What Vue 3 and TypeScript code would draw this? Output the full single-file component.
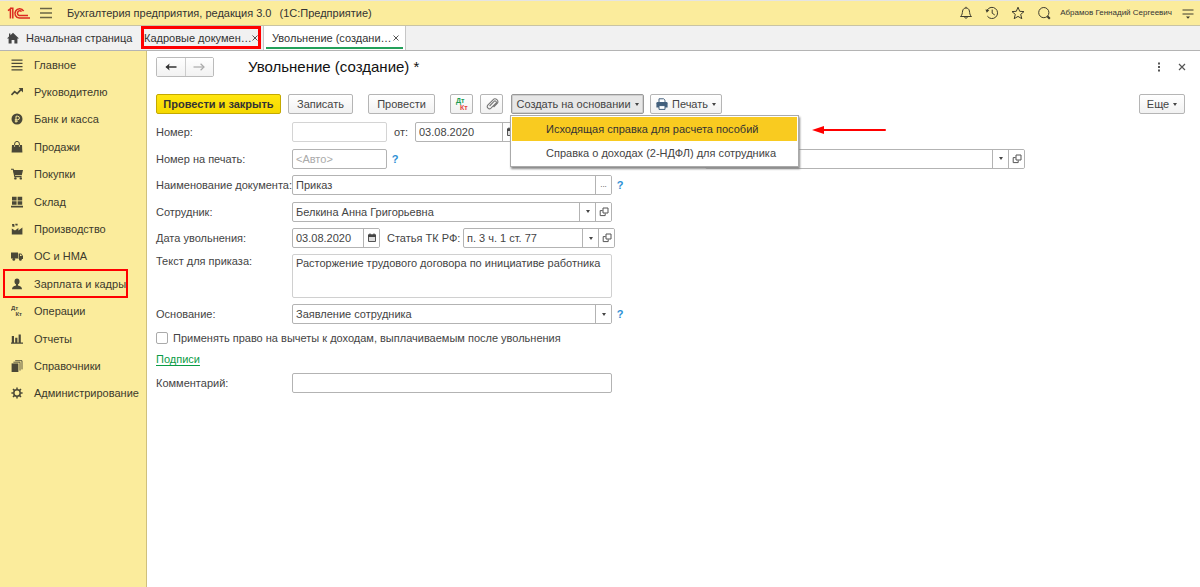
<script setup lang="ts">
import { ref } from 'vue'

interface Section {
  id: string
  title: string
  marked?: boolean
}

const sections: Section[] = [
  { id: 'main', title: 'Главное' },
  { id: 'chart', title: 'Руководителю' },
  { id: 'ruble', title: 'Банк и касса' },
  { id: 'bag', title: 'Продажи' },
  { id: 'cart', title: 'Покупки' },
  { id: 'store', title: 'Склад' },
  { id: 'factory', title: 'Производство' },
  { id: 'truck', title: 'ОС и НМА' },
  { id: 'person', title: 'Зарплата и кадры', marked: true },
  { id: 'dtkt', title: 'Операции' },
  { id: 'bars', title: 'Отчеты' },
  { id: 'books', title: 'Справочники' },
  { id: 'gear', title: 'Администрирование' },
]

const docNumber = ref('')
const docDate = ref('03.08.2020')
const printNumber = ref('')
const organization = ref('')
const docName = ref('Приказ')
const employee = ref('Белкина Анна Григорьевна')
const dismissalDate = ref('03.08.2020')
const article = ref('п. 3 ч. 1 ст. 77')
const orderText = ref('Расторжение трудового договора по инициативе работника')
const reason = ref('Заявление сотрудника')
const applyDeductions = ref(false)
const comment = ref('')
</script>

<template>
  <div class="app">
    <header class="topbar">
      <svg class="logo" viewBox="0 0 24 14" aria-label="1С">
        <g fill="none" stroke="#dc2a20" stroke-width="1.5">
          <path d="M1 4.6 3.4 2.8V12.4M3 2.2H5.8V12.4" />
          <path d="M16.6 5.2A4.6 4.6 0 1 0 12.4 12H23" />
          <path d="M14.6 5.6A2.4 2.4 0 1 0 12.4 9.6H21" />
        </g>
      </svg>
      <button class="icon-btn burger" aria-label="Меню">
        <svg viewBox="0 0 12 12" width="12" height="12"><path d="M0 1.5H12M0 6H12M0 10.5H12" stroke="#6b6545" stroke-width="1.3" /></svg>
      </button>
      <span class="app-title">Бухгалтерия предприятия, редакция 3.0</span>
      <span class="app-sub">(1С:Предприятие)</span>
      <nav class="tools">
        <button class="icon-btn" aria-label="Уведомления">
          <svg viewBox="0 0 14 14"><path d="M1.5 10.5C3.4 9 3.2 7 3.6 5 4 3 5.2 2 7 2S10 3 10.4 5C10.8 7 10.6 9 12.5 10.5ZM7 .8V2M5.4 10.7Q7 14 8.6 10.7" /></svg>
        </button>
        <button class="icon-btn" aria-label="История">
          <svg viewBox="0 0 14 14"><path d="M2.2 4A5.6 5.6 0 1 1 2.4 10.2M7.2 3.6V7.2L9.8 9" /><path d="M.4 3.4 4.4 4 1.8 6.8Z" fill="#3f3d2e" stroke="none" /></svg>
        </button>
        <button class="icon-btn" aria-label="Избранное">
          <svg viewBox="0 0 14 14"><path d="M7 1.2 8.7 5.3 13 5.6 9.7 8.4 10.8 12.7 7 10.4 3.2 12.7 4.3 8.4 1 5.6 5.3 5.3Z" /></svg>
        </button>
        <button class="icon-btn" aria-label="Поиск">
          <svg viewBox="0 0 14 14"><circle cx="6.8" cy="6.6" r="5.1" /><path d="M10.4 10.2 12.8 12.8" stroke-width="2" /></svg>
        </button>
        <a class="user" href="#user">Абрамов Геннадий Сергеевич</a>
        <button class="icon-btn" aria-label="Настройки">
          <svg viewBox="0 0 14 14"><path d="M1.5 4H12.5M1.5 8H12.5" /><path d="M5 10.4H9L7 12.8Z" fill="#3f3d2e" stroke="none" /></svg>
        </button>
      </nav>
    </header>

    <nav class="tabs">
      <a class="tab home" href="#home">
        <svg viewBox="0 0 12 12" width="12" height="12"><path d="M6 .8 12 6.4H10.4V11.4H7.4V8H4.6V11.4H1.6V6.4H0L2 4.5V1.6H3.4V3.2Z" fill="#444" /></svg>
        <span>Начальная страница</span>
      </a>
      <div class="tab docs">
        <a href="#docs">Кадровые докумен…</a>
        <button class="tab-close" aria-label="Закрыть вкладку"><svg viewBox="0 0 6 6"><path d="M.5.5 5.5 5.5M5.5.5.5 5.5" /></svg></button>
      </div>
      <div class="tab current">
        <a href="#dismissal">Увольнение (создани…</a>
        <button class="tab-close" aria-label="Закрыть вкладку"><svg viewBox="0 0 6 6"><path d="M.5.5 5.5 5.5M5.5.5.5 5.5" /></svg></button>
      </div>
    </nav>

    <div class="body">
      <aside class="sidebar">
        <ul>
          <li v-for="s in sections" :key="s.id">
            <a :href="'#' + s.id" :class="{ marked: s.marked }">
              <svg class="side-icon" viewBox="0 0 12 12">
                <path v-if="s.id === 'main'" d="M.5 1.2H11.5M.5 4.4H11.5M.5 7.6H11.5M.5 10.8H11.5" fill="none" stroke="#4a4837" stroke-width="1.3" />
                <template v-else-if="s.id === 'chart'">
                  <path d="M.5 9 3.6 5.6 6.2 7.6 10.4 3.2" fill="none" stroke="#4a4837" stroke-width="1.7" />
                  <path d="M7.6 2H12V6.4Z" />
                </template>
                <template v-else-if="s.id === 'ruble'">
                  <circle cx="6" cy="6" r="5.5" />
                  <path d="M5 9.6V3.2H6.6A1.8 1.8 0 0 1 6.6 6.8H3.8M3.8 8.2H6.8" fill="none" stroke="#fbec9c" />
                </template>
                <template v-else-if="s.id === 'bag'">
                  <path d="M1 4H11L11.4 11.6H.6Z" />
                  <path d="M3.6 5.6V3A2.2 2.4 0 0 1 8.4 3V5.6" fill="none" stroke="#4a4837" />
                  <path d="M3.6 4V6M8.4 4V6" stroke="#fbec9c" stroke-width=".7" />
                </template>
                <template v-else-if="s.id === 'cart'">
                  <path d="M2.2 2H12L10.8 7.2H3.4Z" />
                  <path d="M0 1.2H2.2L3.8 8.6H10.6" fill="none" stroke="#4a4837" stroke-width="1.1" />
                  <circle cx="4.4" cy="10.4" r="1.2" /><circle cx="9.8" cy="10.4" r="1.2" />
                </template>
                <path v-else-if="s.id === 'store'" d="M1 .8H5.6V4.4H1ZM6.6.8H11.2V4.4H6.6ZM1 5.2H5.6V8.8H1ZM6.6 5.2H11.2V8.8H6.6ZM0 9.8H12V11.4H0Z" />
                <path v-else-if="s.id === 'factory'" d="M.8 11.4V5.4L4 7.6 7.4 5V7.4L11.4 4.6V11.4ZM1 1H3.2L3.6 3.8H1.4ZM4.2.8H6.6V2.4H4.6Z" />
                <template v-else-if="s.id === 'truck'">
                  <path d="M0 2.4H7V8.4H0ZM7.6 3.6H10.2L12 6V9H7.6Z" />
                  <circle cx="2.8" cy="9.4" r="1.4" /><circle cx="9.4" cy="9.4" r="1.4" />
                  <path d="M9 4.6H10L10.9 6H9Z" fill="#fbec9c" />
                </template>
                <template v-else-if="s.id === 'person'">
                  <ellipse cx="6" cy="3.4" rx="2.5" ry="3" />
                  <path d="M1 11.2C1 8.6 2.6 8.2 5 7.4V6H7V7.4C9.4 8.2 11 8.6 11 11.2Z" />
                </template>
                <template v-else-if="s.id === 'dtkt'">
                  <text x="0" y="5" font-size="6" font-weight="bold">Дт</text>
                  <text x="4.4" y="11.4" font-size="6" font-weight="bold">Кт</text>
                </template>
                <path v-else-if="s.id === 'bars'" d="M.8 3H3V9.6H.8ZM4.2 4.8H6.4V9.6H4.2ZM7.6 1.6H9.8V9.6H7.6ZM0 9.6H12V10.8H0Z" />
                <template v-else-if="s.id === 'books'">
                  <path d="M.6 3.4H7.4V12H.6Z" />
                  <path d="M2.4 2.2H9V10.6M4.2.7H11V9.4" fill="none" stroke="#4a4837" stroke-width=".9" />
                </template>
                <template v-else>
                  <circle cx="6" cy="6" r="3.2" fill="none" stroke="#4a4837" stroke-width="1.5" />
                  <path d="M6 .4V2.6M6 9.4V11.6M.4 6H2.6M9.4 6H11.6M2 2 3.6 3.6M8.4 8.4 10 10M10 2 8.4 3.6M3.6 8.4 2 10" stroke="#4a4837" stroke-width="1.5" />
                </template>
              </svg>
              <span>{{ s.title }}</span>
            </a>
          </li>
        </ul>
      </aside>

      <main class="page">
        <div class="page-head">
          <div class="history">
            <button aria-label="Назад"><svg viewBox="0 0 12 8"><path d="M1.5 4H11.5" stroke="#333" stroke-width="1.5" /><path d="M.4 4 4.6.6 3.8 4 4.6 7.4Z" fill="#333" /></svg></button>
            <button aria-label="Вперед"><svg viewBox="0 0 12 8"><path d="M.5 4H10.5" stroke="#aaa" stroke-width="1.2" /><path d="M7.6.8 11 4 7.6 7.2" fill="none" stroke="#aaa" stroke-width="1.2" /></svg></button>
          </div>
          <h1>Увольнение (создание) *</h1>
          <div class="page-actions">
            <button class="icon-btn" aria-label="Дополнительно"><svg viewBox="0 0 10 10"><path d="M4 .6H6V2.6H4ZM4 4H6V6H4ZM4 7.4H6V9.4H4Z" fill="#555" /></svg></button>
            <button class="icon-btn" aria-label="Закрыть"><svg viewBox="0 0 10 10"><path d="M2 2 8 8M8 2 2 8" stroke="#555" stroke-width="1.2" /></svg></button>
          </div>
        </div>

        <div class="toolbar">
          <button class="btn primary">Провести и закрыть</button>
          <button class="btn save">Записать</button>
          <button class="btn post">Провести</button>
          <button class="btn square" aria-label="Дт Кт">
            <svg viewBox="0 0 14 14"><text x="1" y="6" font-size="7" font-weight="bold" fill="#1a9c52">Дт</text><text x="5" y="12.6" font-size="7" font-weight="bold" fill="#e5423c">Кт</text></svg>
          </button>
          <button class="btn square" aria-label="Файлы">
            <svg viewBox="0 0 14 14"><path d="M4.6 9 9 4.4A1.3 1.3 0 0 1 11 6.2L6 11.2A2.2 2.2 0 0 1 2.8 8.2L8 2.8A2.6 2.6 0 0 1 12 6.6L8.6 10" fill="none" stroke="#777" stroke-width="1.1" /></svg>
          </button>
          <div class="dropdown">
            <button class="btn based" aria-haspopup="menu" aria-expanded="true">Создать на основании<i class="caret"></i></button>
            <div class="menu" role="menu">
              <button class="selected" role="menuitem">Исходящая справка для расчета пособий</button>
              <button role="menuitem">Справка о доходах (2-НДФЛ) для сотрудника</button>
              <svg class="pointer" viewBox="0 0 74 8"><path d="M10 4H73" stroke="#f00" stroke-width="2" stroke-linecap="round" /><path d="M0 4 12 0V8Z" fill="#f00" /></svg>
            </div>
          </div>
          <button class="btn print">
            <svg viewBox="0 0 12 12"><path d="M3 4V.8H7.6L9 2.2V4" fill="#fff" stroke="#43607c" /><path d="M1.6 4H10.4Q11.6 4 11.6 5.2V9.4H.4V5.2Q.4 4 1.6 4Z" fill="#43607c" /><path d="M3 7.6H9V11.4H3Z" fill="#fff" stroke="#43607c" /></svg>
            Печать<i class="caret"></i>
          </button>
          <button class="btn more">Еще<i class="caret"></i></button>
        </div>

        <form class="form" @submit.prevent>
          <div class="fields">
            <div class="row">
              <label for="num">Номер:</label>
              <div class="field short pale"><input id="num" v-model="docNumber" /></div>
              <label class="from" for="date">от:</label>
              <div class="field stamp">
                <input id="date" v-model="docDate" />
                <button class="side" aria-label="Календарь"><svg viewBox="0 0 10 10"><path d="M1.5 2H8.5V8.5H1.5Z" fill="#ddd" stroke="#555" /><path d="M1 1.6H9V4H1ZM2.4.4H3.6V2H2.4ZM6.4.4H7.6V2H6.4Z" fill="#444" /></svg></button>
              </div>
            </div>
            <div class="row">
              <label for="print">Номер на печать:</label>
              <div class="field short"><input id="print" v-model="printNumber" placeholder="&lt;Авто&gt;" /></div>
              <button class="help" aria-label="Справка">?</button>
              <div class="field wide org">
                <input v-model="organization" aria-label="Организация" />
                <button class="side" aria-label="Выбрать"><i class="caret"></i></button>
                <button class="side" aria-label="Открыть"><svg viewBox="0 0 10 10"><path d="M4 1H9V6H4ZM3.6 3.6H1.2V8.6H6.2V6.4" fill="none" stroke="#555" /></svg></button>
              </div>
            </div>
            <div class="row">
              <label for="name">Наименование документа:</label>
              <div class="field wide">
                <input id="name" v-model="docName" />
                <button class="side dots" aria-label="Выбрать">...</button>
              </div>
              <button class="help" aria-label="Справка">?</button>
            </div>
            <div class="row">
              <label for="emp">Сотрудник:</label>
              <div class="field wide">
                <input id="emp" v-model="employee" />
                <button class="side" aria-label="Выбрать"><i class="caret"></i></button>
                <button class="side" aria-label="Открыть"><svg viewBox="0 0 10 10"><path d="M4 1H9V6H4ZM3.6 3.6H1.2V8.6H6.2V6.4" fill="none" stroke="#555" /></svg></button>
              </div>
            </div>
            <div class="row">
              <label for="ddate">Дата увольнения:</label>
              <div class="field stamp">
                <input id="ddate" v-model="dismissalDate" />
                <button class="side" aria-label="Календарь"><svg viewBox="0 0 10 10"><path d="M1.5 2H8.5V8.5H1.5Z" fill="#ddd" stroke="#555" /><path d="M1 1.6H9V4H1ZM2.4.4H3.6V2H2.4ZM6.4.4H7.6V2H6.4Z" fill="#444" /></svg></button>
              </div>
              <label class="law" for="art">Статья ТК РФ:</label>
              <div class="field article">
                <input id="art" v-model="article" />
                <button class="side" aria-label="Выбрать"><i class="caret"></i></button>
                <button class="side" aria-label="Открыть"><svg viewBox="0 0 10 10"><path d="M4 1H9V6H4ZM3.6 3.6H1.2V8.6H6.2V6.4" fill="none" stroke="#555" /></svg></button>
              </div>
            </div>
          </div>
          <div class="row top">
            <label for="text">Текст для приказа:</label>
            <textarea id="text" v-model="orderText"></textarea>
          </div>
          <div class="row">
            <label for="reason">Основание:</label>
            <div class="field wide">
              <input id="reason" v-model="reason" />
              <button class="side" aria-label="Выбрать"><i class="caret"></i></button>
            </div>
            <button class="help" aria-label="Справка">?</button>
          </div>
          <div class="row check">
            <input id="apply" v-model="applyDeductions" type="checkbox" />
            <label for="apply">Применять право на вычеты к доходам, выплачиваемым после увольнения</label>
          </div>
          <div class="row sign"><a href="#sign">Подписи</a></div>
          <div class="row">
            <label for="comment">Комментарий:</label>
            <div class="field wide"><input id="comment" v-model="comment" /></div>
          </div>
        </form>
      </main>
    </div>
  </div>
</template>

<style>
body { margin: 0; background: #fff; }
</style>

<style scoped>
* { box-sizing: border-box; }
.app {
  display: flex;
  flex-direction: column;
  min-height: 100vh;
  font: 11px/14px "Liberation Sans", Arial, sans-serif;
  color: #444;
}
button, input, textarea { font: inherit; color: inherit; margin: 0; }
button { cursor: pointer; }
a { color: inherit; text-decoration: none; }
svg { display: block; flex: none; }

.topbar {
  display: flex;
  align-items: center;
  height: 26px;
  padding: 0 5px 0 7px;
  background: #fbec9c;
  border-top: 1px solid #e4e4e4;
  border-bottom: 1px solid #c9c4a4;
  color: #333;
}
.logo { width: 24px; height: 14px; }
.icon-btn { padding: 0; border: 0; background: none; }
.burger { margin: 0 15px 0 9px; }
.app-sub { margin-left: 8px; }
.tools { display: flex; align-items: center; gap: 12px; margin-left: auto; }
.tools svg { width: 14px; height: 14px; fill: none; stroke: #3f3d2e; }
.user { font-size: 8px; margin: 0 -3px; }

.tabs {
  display: flex;
  height: 25px;
  background: #f1f1f1;
  border-bottom: 1px solid #b4b4b4;
  color: #333;
}
.tab { display: flex; align-items: center; border-right: 1px solid #c6c6c6; white-space: nowrap; }
.home { width: 141px; padding-left: 7px; gap: 7px; border-right: 0; }
.docs { position: relative; width: 123px; padding: 0 5px 0 3px; justify-content: space-between; }
.docs::after { content: ""; position: absolute; inset: 0 2px 1px 0; border: 3px solid #f00; pointer-events: none; }
.current { position: relative; width: 142px; padding: 0 6px 0 8px; justify-content: space-between; background: #fff; }
.current::after { content: ""; position: absolute; left: 2px; right: 2px; bottom: 1px; height: 2px; background: #23a05a; }
.tab-close { padding: 0; border: 0; background: none; }
.tab-close svg { width: 6px; height: 6px; stroke: #555; }

.body { display: flex; flex: 1; }
.sidebar { flex: none; width: 147px; background: #fbec9c; border-right: 1px solid #cfc07c; color: #3c3a2c; }
.sidebar ul { display: grid; grid-auto-rows: 1fr; height: 356px; margin: 0; padding: 0; list-style: none; }
.sidebar li { display: flex; }
.sidebar a { position: relative; display: flex; align-items: center; width: 100%; padding-left: 11px; gap: 11px; white-space: nowrap; }
.side-icon { width: 12px; height: 12px; fill: #4a4837; }
.marked::after { content: ""; position: absolute; inset: -1px 18px -1px 3px; border: 2px solid #f00; }

.page { flex: 1; min-width: 0; padding: 6px 15px 0 9px; }
.page-head { display: flex; align-items: center; height: 20px; }
.history { display: flex; width: 58px; height: 20px; border: 1px solid #bbb; border-radius: 2px; }
.history button { display: grid; place-items: center; flex: 1; padding: 0; border: 0; background: linear-gradient(#fff, #f2f2f2); }
.history button + button { border-left: 1px solid #ccc; }
.history svg { width: 12px; height: 8px; }
h1 { margin: 0 0 0 34px; font-size: 15px; line-height: 20px; font-weight: 400; color: #111; }
.page-actions { display: flex; gap: 13px; margin: 0 -2px 0 auto; }
.page-actions svg { width: 10px; height: 10px; }

.toolbar { display: flex; margin-top: 17px; height: 20px; }
.btn {
  display: flex;
  align-items: center;
  justify-content: center;
  height: 20px;
  padding: 0;
  border: 1px solid #b5b5b5;
  border-radius: 2px;
  background: linear-gradient(#fff, #f1f1f1);
  white-space: nowrap;
}
.primary { width: 125px; border-color: #c4a900; background: linear-gradient(#ffe610, #f5d800); font-weight: 700; color: #333; }
.save { width: 65px; margin-left: 7px; }
.post { width: 67px; margin-left: 15px; }
.square { width: 23px; margin-left: 7px; }
.post + .square { margin-left: 15px; }
.square svg { width: 14px; height: 14px; }
.print svg { width: 12px; height: 12px; }
.caret { width: 0; height: 0; margin-left: 4px; border: 2px solid transparent; border-top: 3px solid #444; border-bottom: 0; }
.dropdown { position: relative; margin-left: 8px; }
.based { width: 133px; border-color: #999; background: #e7e7e7; box-shadow: inset 0 0 0 1px #cfcfcf; }
.menu {
  position: absolute;
  z-index: 2;
  top: 21px;
  left: -1px;
  width: 289px;
  padding: 1px;
  background: #fff;
  border: 1px solid #aaa;
  box-shadow: 1px 2px 2px #888;
}
.menu button { display: block; width: 100%; height: 24px; padding: 0 0 0 34px; border: 0; background: none; text-align: left; white-space: nowrap; }
.menu .selected { background: #f9cb20; color: #333; }
.pointer { position: absolute; top: 10px; left: 301px; width: 74px; height: 8px; }
.print { width: 72px; margin-left: 6px; gap: 4px; }
.print .caret { margin-left: 0; }
.more { width: 46px; margin-left: auto; }

.form { margin-top: 8px; }
.fields { display: flex; flex-direction: column; justify-content: space-between; height: 126px; }
.row { display: flex; align-items: center; white-space: nowrap; }
.row > label:first-child { flex: none; width: 136px; }
.field { display: flex; flex: none; height: 20px; border: 1px solid #b3b3b3; border-radius: 2px; background: #fff; overflow: hidden; }
.field input { flex: 1; min-width: 0; padding: 0 3px; border: 0; background: none; outline: 0; }
.field input::placeholder { color: #aaa; opacity: 1; }
.short { width: 95px; }
.pale { border-color: #d4d4d4; }
.stamp { width: 88px; }
.wide { width: 320px; }
.article { width: 152px; }
.from { width: 28px; padding-left: 7px; }
.from + .stamp { width: 104px; }
.law { width: 83px; padding-left: 7px; }
.side { display: grid; place-items: center; flex: none; width: 16px; padding: 0; border: 0; border-left: 1px solid #b3b3b3; background: #fff; }
.side svg { width: 10px; height: 10px; }
.side .caret { margin: 0; }
.dots { font-size: 8px; }
.help { width: 16px; padding: 0; border: 0; background: none; color: #2d8fd5; font-weight: 700; text-align: center; }
.org { margin-left: 302px; }
.top { align-items: flex-start; margin-top: 6px; }
textarea { display: block; width: 320px; height: 44px; padding: 1px 3px; border: 1px solid #d0d0d0; border-radius: 2px; resize: none; outline: 0; }
.top + .row { margin-top: 6px; }
.check { margin-top: 7px; gap: 5px; }
.check input { appearance: none; width: 12px; height: 12px; border: 1px solid #aaa; border-radius: 2px; background: #fff; }
.sign { height: 14px; margin: 7px 0; color: #0a9c46; }
.sign a { text-decoration: underline; text-underline-offset: 2px; }
</style>
